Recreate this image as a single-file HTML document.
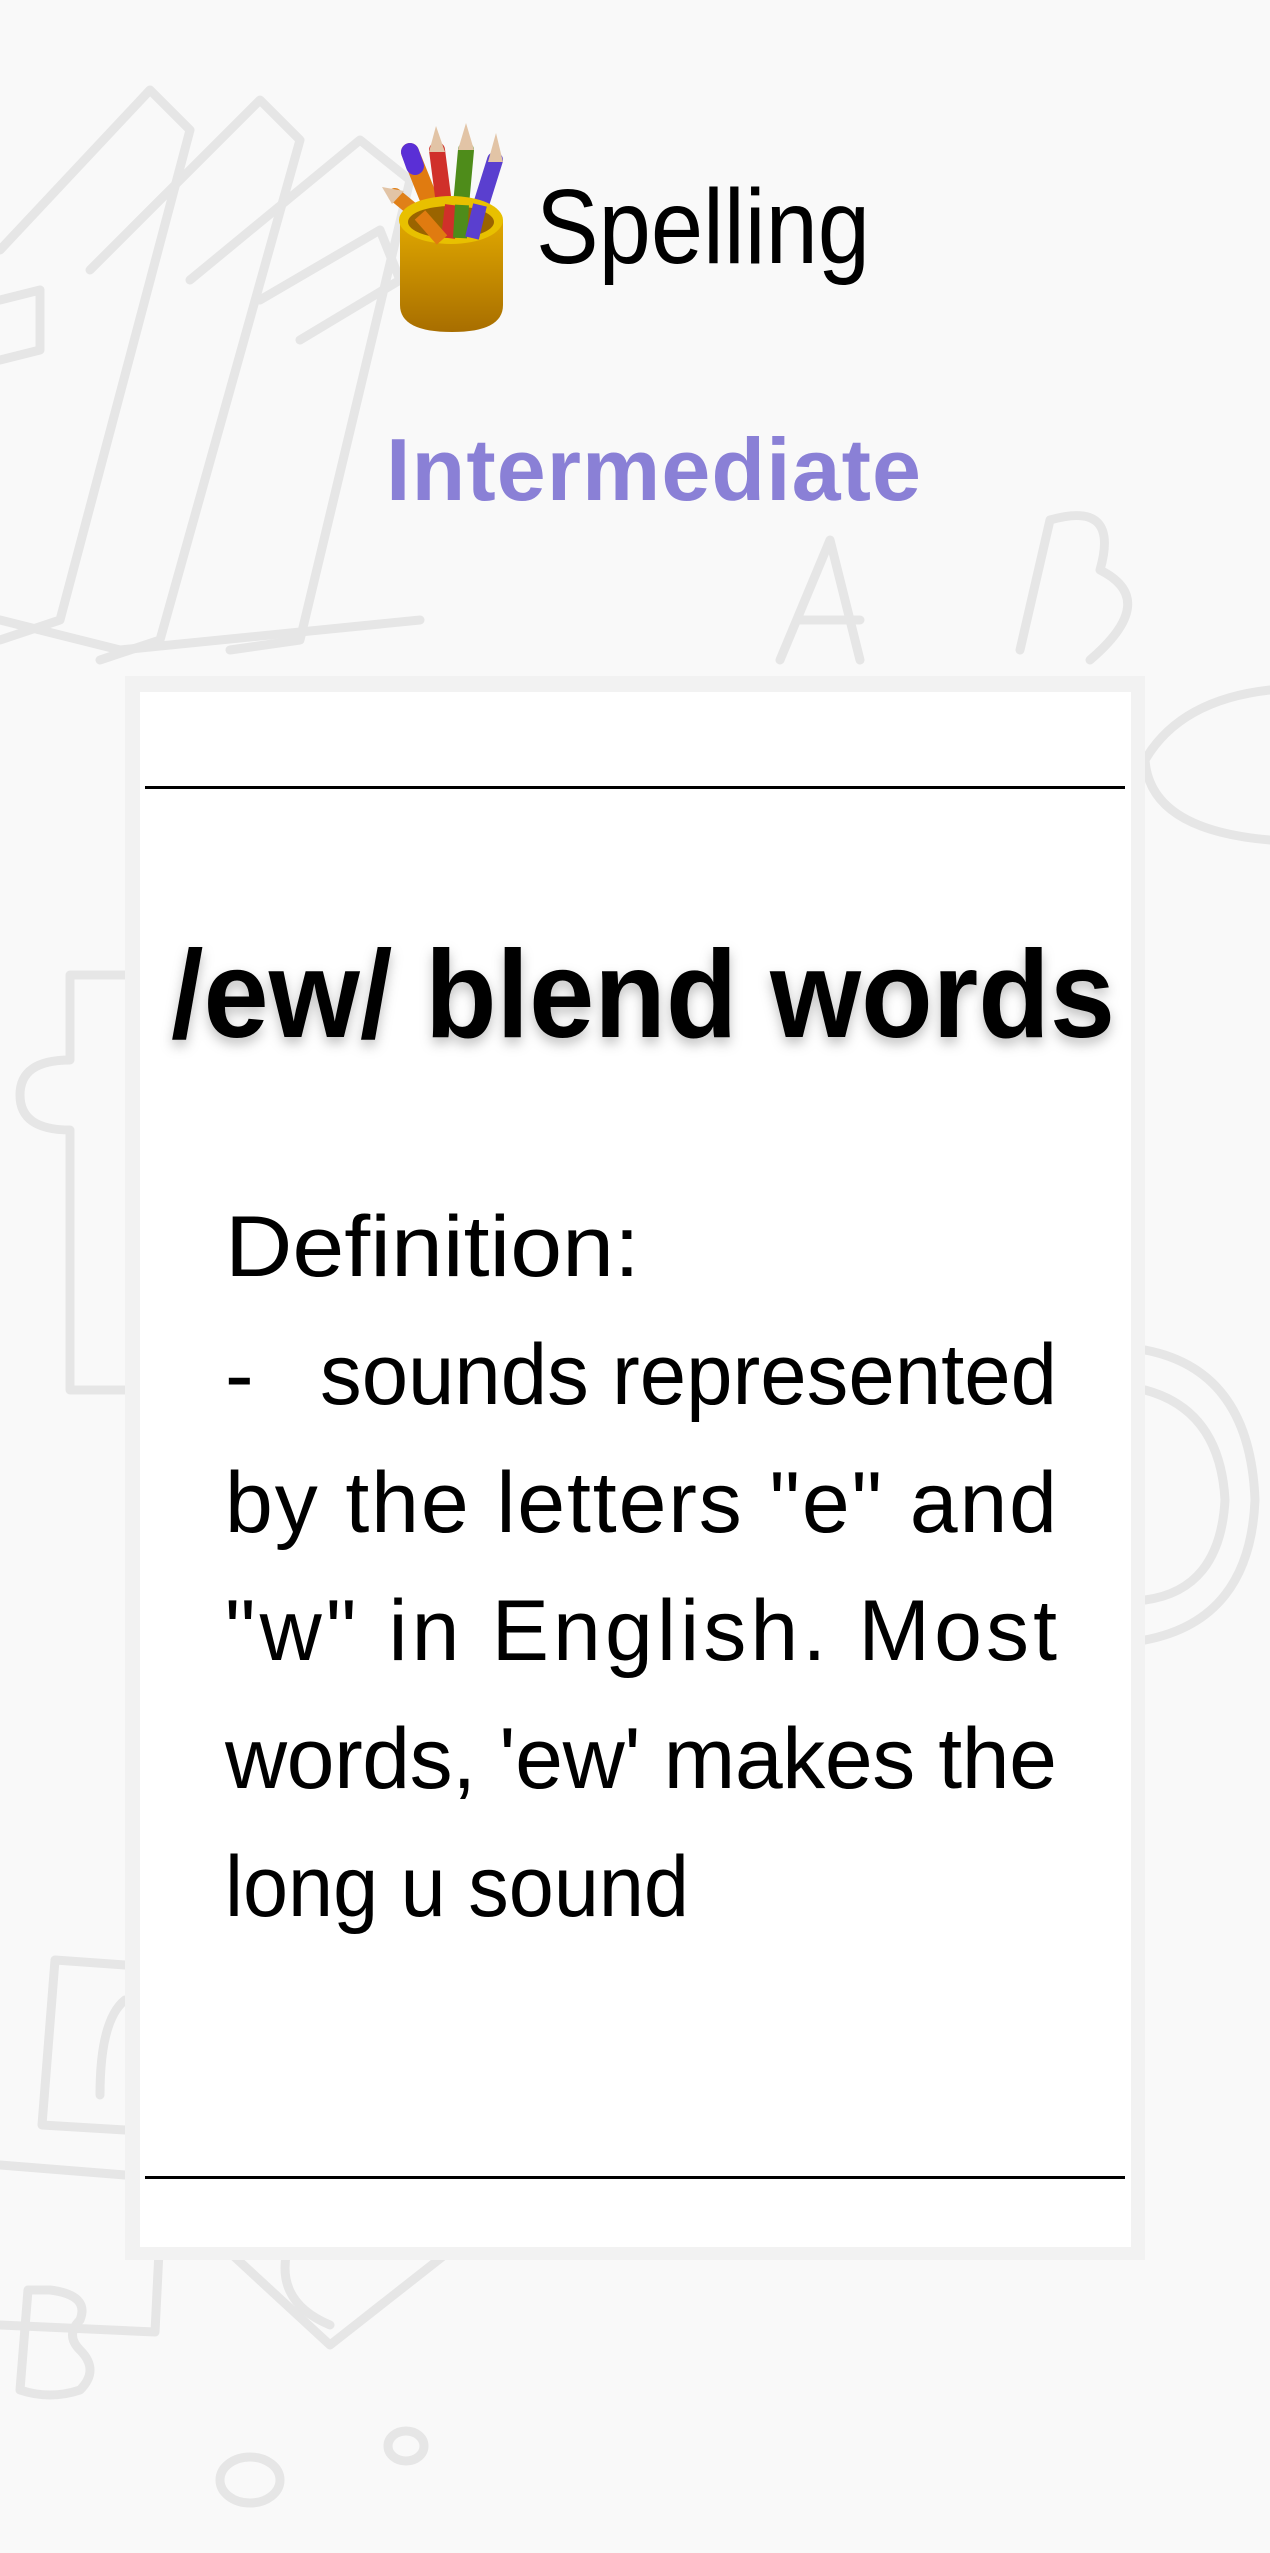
<!DOCTYPE html>
<html><head><meta charset="utf-8">
<style>
html,body{margin:0;padding:0;background:#f9f9f9;}
body{width:1270px;height:2553px;position:relative;overflow:hidden;}
svg{position:absolute;left:0;top:0;}
</style></head>
<body>
<svg width="1270" height="2553" viewBox="0 0 1270 2553" xmlns="http://www.w3.org/2000/svg">
<defs>
<filter id="sh" x="-5%" y="-20%" width="110%" height="140%"><feDropShadow dx="0" dy="6" stdDeviation="6" flood-color="#000" flood-opacity="0.25"/></filter>
<linearGradient id="cup" x1="0" y1="0" x2="0" y2="1"><stop offset="0" stop-color="#e0a800"/><stop offset="1" stop-color="#a86e00"/></linearGradient>
</defs>
<g fill="none" stroke="#e6e6e6" stroke-width="9" stroke-linecap="round" stroke-linejoin="round">
<path d="M0 250 L150 90 L190 130 L60 620 L0 640"/>
<path d="M90 270 L260 100 L300 140 L160 640 L100 660"/>
<path d="M190 280 L360 140 L410 180 L300 640 L230 650"/>
<path d="M0 300 L40 290 L40 350 L0 360"/>
<path d="M260 300 L380 230 L400 280 L300 340"/>
<path d="M0 620 L120 650 L420 620"/>
<path d="M780 660 L830 540 L860 660 M800 620 L860 620"/>
<path d="M1020 650 L1050 520 Q1120 500 1100 570 Q1160 600 1090 660"/>
<path d="M1145 760 Q1180 700 1270 690 M1145 760 Q1150 830 1270 840"/>
<path d="M125 975 L70 975 L70 1060 Q20 1060 20 1095 Q20 1130 70 1130 L70 1390 L125 1390"/>
<path d="M1145 1350 Q1250 1370 1255 1500 Q1250 1620 1145 1640"/>
<path d="M1145 1390 Q1220 1410 1225 1500 Q1220 1590 1145 1600"/>
<path d="M125 1965 L55 1960 L42 2125 L125 2130"/>
<path d="M100 2095 Q100 2020 125 2000"/>
<path d="M0 2165 L125 2175"/>
<path d="M0 2325 L155 2332 L162 2190"/>
<path d="M28 2290 L20 2390 Q50 2400 80 2390 Q100 2370 80 2350 Q65 2335 80 2320 Q90 2295 50 2290 Z"/>
<path d="M250 2190 L200 2225 L330 2345 L470 2235 L420 2190"/>
<path d="M390 2220 Q330 2225 290 2240 Q270 2300 330 2325"/>
<ellipse cx="250" cy="2480" rx="30" ry="23"/>
<ellipse cx="406" cy="2446" rx="18" ry="15"/>
</g>
<g>
<g stroke-linecap="round">
<line x1="410" y1="152" x2="442" y2="232" stroke="#e07b10" stroke-width="18"/>
<line x1="410" y1="152" x2="415" y2="166" stroke="#5a2fd6" stroke-width="18"/>
<line x1="437" y1="150" x2="448" y2="235" stroke="#d0302a" stroke-width="16"/>
<line x1="466" y1="150" x2="458" y2="238" stroke="#4e8c1a" stroke-width="16"/>
<line x1="495" y1="160" x2="470" y2="240" stroke="#5a3fcf" stroke-width="16"/>
<line x1="395" y1="195" x2="452" y2="242" stroke="#e08018" stroke-width="14"/>
</g>
<polygon points="429,152 436,126 445,152" fill="#e2c4a6"/>
<polygon points="458,150 466,123 474,150" fill="#e2c4a6"/>
<polygon points="488,162 496,133 503,162" fill="#e2c4a6"/>
<polygon points="392,204 382,187 404,191" fill="#e2c4a6"/>
<path d="M400 220 L400 305 Q400 332 452 332 Q503 332 503 305 L503 220 Z" fill="url(#cup)"/>
<ellipse cx="451" cy="220" rx="52" ry="24" fill="#e8c000"/>
<ellipse cx="451" cy="222" rx="43" ry="16" fill="#9a6400"/>
<line x1="448" y1="238" x2="452" y2="205" stroke="#d0302a" stroke-width="14"/>
<line x1="460" y1="238" x2="462" y2="205" stroke="#4e8c1a" stroke-width="14"/>
<line x1="472" y1="238" x2="480" y2="205" stroke="#5a3fcf" stroke-width="14"/>
<line x1="420" y1="215" x2="442" y2="240" stroke="#e07b10" stroke-width="14"/>
</g>
<text x="536" y="263" font-family="Liberation Sans, sans-serif" font-size="106" fill="#000" textLength="334" lengthAdjust="spacingAndGlyphs">Spelling</text>
<text x="386" y="500" font-family="Liberation Sans, sans-serif" font-weight="bold" font-size="88" fill="#8a80d6" textLength="535" lengthAdjust="spacing">Intermediate</text>
<rect x="125" y="676" width="1020" height="1584" fill="#f2f2f2"/>
<rect x="140" y="692" width="991" height="1555" fill="#fff"/>
<rect x="145" y="786" width="980" height="3" fill="#000"/>
<rect x="145" y="2176" width="980" height="3" fill="#000"/>
<text x="171" y="1037" font-family="Liberation Sans, sans-serif" font-weight="bold" font-size="124" fill="#000" textLength="944" lengthAdjust="spacingAndGlyphs" filter="url(#sh)">/ew/ blend words</text>
<g font-family="Liberation Sans, sans-serif" font-size="86" fill="#000">
<text x="225" y="1276" textLength="415" lengthAdjust="spacingAndGlyphs">Definition:</text>
<text x="225" y="1404">-</text>
<text x="320" y="1404" textLength="737" lengthAdjust="spacingAndGlyphs">sounds represented</text>
<text x="225" y="1532" textLength="832" lengthAdjust="spacing">by the letters "e" and</text>
<text x="225" y="1660" textLength="832" lengthAdjust="spacing">"w"  in  English.  Most</text>
<text x="225" y="1788" textLength="832" lengthAdjust="spacing">words, 'ew' makes the</text>
<text x="225" y="1916" textLength="464" lengthAdjust="spacingAndGlyphs">long u sound</text>
</g>
</svg>
</body></html>
